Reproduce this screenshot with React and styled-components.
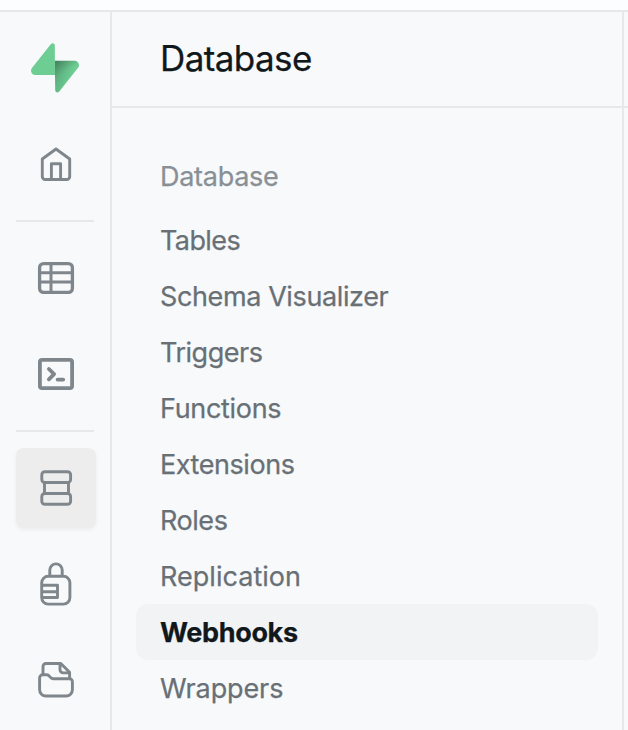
import React from "react";
import styled, { createGlobalStyle } from "styled-components";

const line = "#e6e8ea";
const surface = "#f8f9fb";

const GlobalStyle = createGlobalStyle`
  *, *::before, *::after { box-sizing: border-box; }
  body { margin: 0; background: ${surface}; }
`;

const Page = styled.div`
  display: flex;
  flex-direction: column;
  width: 628px;
  height: 730px;
  overflow: hidden;
  background: ${surface};
  font-family: Inter, "Liberation Sans", sans-serif;
  -webkit-text-stroke: 0.25px currentColor;
`;

const TopStrip = styled.div`
  flex: 0 0 12px;
  background: #fcfdfe;
  border-bottom: 2px solid ${line};
`;

const Body = styled.div`
  display: flex;
  flex: 1;
  min-height: 0;
`;

const Rail = styled.nav`
  display: flex;
  flex-direction: column;
  gap: 16px;
  flex: 0 0 112px;
  padding: 16px 0 0 16px;
  border-right: 2px solid ${line};
`;

const RailButton = styled.a`
  display: flex;
  flex: 0 0 80px;
  width: 80px;
  align-items: center;
  justify-content: center;
  border-radius: 8px;
  color: #7f868c;
  background: ${(p) => (p.$active ? "#ededed" : "transparent")};
  box-shadow: ${(p) => (p.$active ? "0 2px 4px rgba(0, 0, 0, 0.05)" : "none")};
`;

const RailDivider = styled.div`
  flex: 0 0 2px;
  width: 78px;
  background: ${line};
`;

const Icon = styled.svg`
  display: block;
  width: 80px;
  height: 80px;
  fill: none;
  stroke: currentColor;
  stroke-width: ${(p) => p.$weight || 2.9};
  stroke-linejoin: round;
`;

const LogoMark = styled.svg`
  display: block;
  width: 48px;
  height: 50px;
  margin-left: -2px;
`;

const Panel = styled.section`
  display: flex;
  flex-direction: column;
  flex: 0 0 512px;
  border-right: 2px solid ${line};
`;

const Content = styled.main`
  flex: 1;
`;

const Header = styled.header`
  display: flex;
  align-items: center;
  height: 96px;
  padding: 0 0 2px 48px;
  border-bottom: 2px solid ${line};
`;

const Title = styled.h1`
  margin: 0;
  color: #11181c;
  font-size: 35px;
  font-weight: 400;
  line-height: 48px;
  letter-spacing: -0.6px;
`;

const Menu = styled.div`
  display: flex;
  flex-direction: column;
  padding: 40px 24px 0;
`;

const GroupLabel = styled.h2`
  margin: 0 0 8px;
  padding-left: 24px;
  color: #889096;
  font-size: 27px;
  font-weight: 400;
  height: 56px;
  line-height: 58px;
  letter-spacing: -0.28px;
`;

const MenuItem = styled.a`
  height: 56px;
  padding-left: 24px;
  border-radius: 12px;
  font-size: 27px;
  line-height: 58px;
  white-space: nowrap;
  letter-spacing: ${(p) => p.$tracking}px;
  color: ${(p) => (p.$active ? "#11181c" : "#687076")};
  font-weight: ${(p) => (p.$active ? 700 : 400)};
  background: ${(p) => (p.$active ? "#f1f3f5" : "transparent")};
`;

const Logo = () => (
  <LogoMark viewBox="0 0 109 113">
    <defs>
      <linearGradient id="bolt" x1="54" y1="55" x2="94" y2="72" gradientUnits="userSpaceOnUse">
        <stop stopColor="#57a576" />
        <stop offset="1" stopColor="#6dcd93" />
      </linearGradient>
      <linearGradient id="shade" x1="42" y1="34" x2="66" y2="72" gradientUnits="userSpaceOnUse">
        <stop stopColor="#000" stopOpacity="0.28" />
        <stop offset="1" stopColor="#000" stopOpacity="0" />
      </linearGradient>
    </defs>
    <path fill="url(#bolt)" d="M63.7 110.3C60.8 113.9 55 111.9 55 107.3L54 40.1H99.2C107.4 40.1 112 49.5 106.9 55.9Z" />
    <path fill="url(#shade)" d="M63.7 110.3C60.8 113.9 55 111.9 55 107.3L54 40.1H99.2C107.4 40.1 112 49.5 106.9 55.9Z" />
    <path fill="#6dcd93" d="M45.3 2.1C48.2-1.5 54 .4 54 5L54.5 72.3H9.8C1.6 72.3-2.9 62.8 2.2 56.4Z" />
  </LogoMark>
);

const HomeIcon = () => (
  <Icon viewBox="16 124 80 80">
    <path d="M56 149 69.7 159V176.5a3 3 0 0 1-3 3H45.3a3 3 0 0 1-3-3V159Z" />
    <path d="M51.4 179.5V163.7h9.2v15.8" />
  </Icon>
);

const TableIcon = () => (
  <Icon viewBox="16 238 80 80" $weight={3.3}>
    <rect x="39.6" y="263.6" width="32.8" height="28.8" rx="4" />
    <path strokeWidth="3" d="M39.6 272.8h32.8M39.6 282h32.8M51 263.6v28.8" />
  </Icon>
);

const TerminalIcon = () => (
  <Icon viewBox="16 334 80 80" $weight={3.8}>
    <rect x="39.9" y="359.9" width="32.2" height="28.2" rx="2.2" />
    <path strokeLinecap="round" d="m48.9 369 5.2 5.1-5.2 5.2M57.6 379.6h5.6" />
  </Icon>
);

const DatabaseIcon = () => (
  <Icon viewBox="16 448 80 80">
    <rect x="41.8" y="471.7" width="28.8" height="10.8" rx="3" />
    <path d="M44.5 482.5v11M68.5 482.5v11" />
    <rect x="41.8" y="493.5" width="28.8" height="10.8" rx="3" />
  </Icon>
);

const LockIcon = () => (
  <Icon viewBox="16 544 80 80">
    <rect x="41.7" y="576.3" width="28.2" height="27.8" rx="6.5" />
    <path d="M49.8 576.3v-6.2a6.2 6.2 0 0 1 12.4 0v6.2M41.7 585.3h15.8v12.2H41.7M41.7 591.7h15.8" />
  </Icon>
);

const FolderIcon = () => (
  <Icon viewBox="16 640 80 80">
    <path d="M39.6 677.8a3 3 0 0 1 3-3h4.2c2.9 0 3 3.9 6.2 3.9h16.4a3 3 0 0 1 3 3v8a6.3 6.3 0 0 1-6.3 6.3H45.9a6.3 6.3 0 0 1-6.3-6.3Z" />
    <path d="M43 674.8v-8.3a3 3 0 0 1 3-3h14.8l8.8 8.8v6.4M60 663.5v6.2a3.2 3.2 0 0 0 3.2 3.2h6.4" />
  </Icon>
);

const items = [
  { label: "Tables", tracking: -0.6 },
  { label: "Schema Visualizer", tracking: -0.39 },
  { label: "Triggers", tracking: -0.47 },
  { label: "Functions", tracking: -0.32 },
  { label: "Extensions", tracking: -0.44 },
  { label: "Roles", tracking: -0.45 },
  { label: "Replication", tracking: 0.03 },
  { label: "Webhooks", tracking: -0.35, active: true },
  { label: "Wrappers", tracking: -0.12 },
];

export default function App() {
  return (
    <Page>
      <GlobalStyle />
      <TopStrip />
      <Body>
        <Rail>
          <RailButton><Logo /></RailButton>
          <RailButton><HomeIcon /></RailButton>
          <RailDivider />
          <RailButton><TableIcon /></RailButton>
          <RailButton><TerminalIcon /></RailButton>
          <RailDivider />
          <RailButton $active><DatabaseIcon /></RailButton>
          <RailButton><LockIcon /></RailButton>
          <RailButton><FolderIcon /></RailButton>
        </Rail>
        <Panel>
          <Header><Title>Database</Title></Header>
          <Menu>
            <GroupLabel>Database</GroupLabel>
            {items.map((item) => (
              <MenuItem key={item.label} $active={item.active} $tracking={item.tracking}>
                {item.label}
              </MenuItem>
            ))}
          </Menu>
        </Panel>
        <Content><Header /></Content>
      </Body>
    </Page>
  );
}
